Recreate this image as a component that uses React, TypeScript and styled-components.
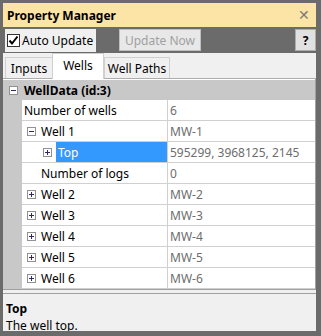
import React from 'react'
import styled, { createGlobalStyle } from 'styled-components'

const GlobalStyle = createGlobalStyle`
  html, body {
    margin: 0;
    padding: 0;
    background: #6b6b6b;
  }
  body {
    font-family: 'Noto Sans', 'Open Sans', sans-serif;
    font-size: 12px;
    color: #000;
  }
`

const Frame = styled.div`
  width: 321px;
  height: 336px;
  box-sizing: border-box;
  padding: 3px 5px 5px 3px;
  background: #6b6b6b;
  display: flex;
  flex-direction: column;
  overflow: hidden;
`

const TitleBar = styled.div`
  height: 24px;
  background: #fce4a6;
  display: flex;
  align-items: center;
  justify-content: space-between;
  padding: 0 6px 0 4px;
  font-weight: 700;
  font-size: 12px;
  flex-shrink: 0;
`

const CloseMark = styled.span`
  color: #7a7a7a;
  font-weight: 400;
  font-size: 14px;
  line-height: 1;
`

const Toolbar = styled.div`
  height: 26px;
  display: flex;
  align-items: flex-start;
  padding-top: 2px;
  box-sizing: border-box;
  flex-shrink: 0;
`

const CheckArea = styled.label`
  margin-left: 2px;
  width: 91px;
  height: 23px;
  background: #f0f0f0;
  display: flex;
  align-items: center;
  gap: 2px;
  padding-left: 2px;
  box-sizing: border-box;
  white-space: nowrap;
`

const CheckBox = styled.span`
  width: 13px;
  height: 13px;
  box-sizing: border-box;
  border: 1px solid #333;
  background: #fff;
  display: flex;
  align-items: center;
  justify-content: center;
`

const ToolButton = styled.div<{ $disabled?: boolean; $bold?: boolean; $w: number }>`
  width: ${p => p.$w}px;
  height: 22px;
  box-sizing: border-box;
  border: 1px solid ${p => (p.$disabled ? '#bfbfbf' : '#adadad')};
  background: ${p => (p.$disabled ? '#e8e8e8' : '#e1e1e1')};
  color: ${p => (p.$disabled ? '#a0a0a0' : '#000')};
  font-weight: ${p => (p.$bold ? 700 : 400)};
  display: flex;
  align-items: center;
  justify-content: center;
  white-space: nowrap;
`

const Spacer = styled.div<{ $w?: number }>`
  width: ${p => (p.$w ? `${p.$w}px` : 'auto')};
  flex: ${p => (p.$w ? '0 0 auto' : '1')};
`

const TabStrip = styled.div`
  height: 26px;
  background: #f0f0f0;
  display: flex;
  align-items: flex-end;
  padding-left: 2px;
  box-sizing: border-box;
  border-bottom: 1px solid #adadad;
  flex-shrink: 0;
`

const Tab = styled.div<{ $active?: boolean; $w: number }>`
  width: ${p => p.$w}px;
  height: ${p => (p.$active ? 26 : 21)}px;
  box-sizing: border-box;
  border: 1px solid #d0d0d0;
  border-bottom: none;
  background: ${p => (p.$active ? '#fff' : '#f0f0f0')};
  display: flex;
  justify-content: center;
  align-items: ${p => (p.$active ? 'flex-start' : 'center')};
  padding-top: ${p => (p.$active ? '3px' : '0')};
  margin-bottom: ${p => (p.$active ? '-1px' : '0')};
  margin-left: ${p => (p.$active ? '-1px' : '0')};
  white-space: nowrap;
`

const Grid = styled.div`
  height: 211px;
  background: #fff;
  border-right: 1px solid #a0a0a0;
  border-bottom: 1px solid #a0a0a0;
  padding-top: 1px;
  box-sizing: border-box;
  display: flex;
  flex-direction: column;
  flex-shrink: 0;
  overflow: hidden;
`

const CategoryRow = styled.div`
  height: 20px;
  background: #c8c8c8;
  display: flex;
  align-items: center;
  padding-left: 6px;
  gap: 6px;
  font-weight: 700;
  flex-shrink: 0;
`

const Row = styled.div`
  height: 21px;
  display: grid;
  grid-template-columns: 19px 146px 1fr;
  flex-shrink: 0;
`

const Gutter = styled.div`
  background: #c8c8c8;
`

const NameCell = styled.div<{ $indent: number }>`
  border-bottom: 1px solid #d0d0d0;
  border-right: 1px solid #d0d0d0;
  display: flex;
  align-items: center;
  padding-left: ${p => p.$indent}px;
  gap: 5px;
  white-space: nowrap;
  overflow: hidden;
`

const Label = styled.span<{ $selected?: boolean }>`
  align-self: stretch;
  display: flex;
  align-items: center;
  flex: ${p => (p.$selected ? 1 : '0 0 auto')};
  background: ${p => (p.$selected ? '#3399ff' : 'transparent')};
  color: ${p => (p.$selected ? '#fff' : '#000')};
  padding-left: ${p => (p.$selected ? '2px' : '0')};
  margin-left: ${p => (p.$selected ? '-1px' : '0')};
`

const ValueCell = styled.div`
  border-bottom: 1px solid #d0d0d0;
  display: flex;
  align-items: center;
  padding-left: 2px;
  color: #6d6d6d;
  white-space: nowrap;
  overflow: hidden;
`

const Toggle = styled.span`
  width: 9px;
  height: 9px;
  box-sizing: border-box;
  border: 1px solid #919191;
  background: #fff;
  position: relative;
  flex-shrink: 0;

  &::before {
    content: '';
    position: absolute;
    left: 1px;
    top: 3px;
    width: 5px;
    height: 1px;
    background: #2b2b6b;
  }
`

const PlusToggle = styled(Toggle)`
  &::after {
    content: '';
    position: absolute;
    left: 3px;
    top: 1px;
    width: 1px;
    height: 5px;
    background: #2b2b6b;
  }
`

const Splitter = styled.div`
  height: 3px;
  background: #f0f0f0;
  border-bottom: 1px solid #a0a0a0;
  flex-shrink: 0;
`

const Description = styled.div`
  flex: 1;
  background: #f0f0f0;
  padding: 6px 0 0 3px;
  overflow: hidden;
  line-height: 17px;
`

const DescTitle = styled.div`
  font-weight: 700;
`

type Item = {
  name: string
  value: string
  indent: number
  toggle?: 'plus' | 'minus'
  selected?: boolean
}

const items: Item[] = [
  { name: 'Number of wells', value: '6', indent: 2 },
  { name: 'Well 1', value: 'MW-1', indent: 5, toggle: 'minus' },
  { name: 'Top', value: '595299, 3968125, 2145', indent: 21, toggle: 'plus', selected: true },
  { name: 'Number of logs', value: '0', indent: 19 },
  { name: 'Well 2', value: 'MW-2', indent: 5, toggle: 'plus' },
  { name: 'Well 3', value: 'MW-3', indent: 5, toggle: 'plus' },
  { name: 'Well 4', value: 'MW-4', indent: 5, toggle: 'plus' },
  { name: 'Well 5', value: 'MW-5', indent: 5, toggle: 'plus' },
  { name: 'Well 6', value: 'MW-6', indent: 5, toggle: 'plus' },
]

const CheckMark = () => (
  <svg width="11" height="11" viewBox="0 0 11 11">
    <path d="M1.5 5.5 L4 8.5 L9.5 1.5" fill="none" stroke="#000" strokeWidth="2" />
  </svg>
)

const App = () => (
  <>
    <GlobalStyle />
    <Frame>
      <TitleBar>
        <span>Property Manager</span>
        <CloseMark>✕</CloseMark>
      </TitleBar>
      <Toolbar>
        <CheckArea>
          <CheckBox>
            <CheckMark />
          </CheckBox>
          Auto Update
        </CheckArea>
        <Spacer $w={23} />
        <ToolButton $disabled $w={82}>Update Now</ToolButton>
        <Spacer />
        <ToolButton $bold $w={21}>?</ToolButton>
      </Toolbar>
      <TabStrip>
        <Tab $w={48}>Inputs</Tab>
        <Tab $active $w={52}>Wells</Tab>
        <Tab $w={66}>Well Paths</Tab>
      </TabStrip>
      <Grid>
        <CategoryRow>
          <Toggle />
          WellData (id:3)
        </CategoryRow>
        {items.map(it => (
          <Row key={it.name}>
            <Gutter />
            <NameCell $indent={it.indent}>
              {it.toggle === 'minus' && <Toggle />}
              {it.toggle === 'plus' && <PlusToggle />}
              <Label $selected={it.selected}>{it.name}</Label>
            </NameCell>
            <ValueCell>{it.value}</ValueCell>
          </Row>
        ))}
      </Grid>
      <Splitter />
      <Description>
        <DescTitle>Top</DescTitle>
        <div>The well top.</div>
      </Description>
    </Frame>
  </>
)

export default App
